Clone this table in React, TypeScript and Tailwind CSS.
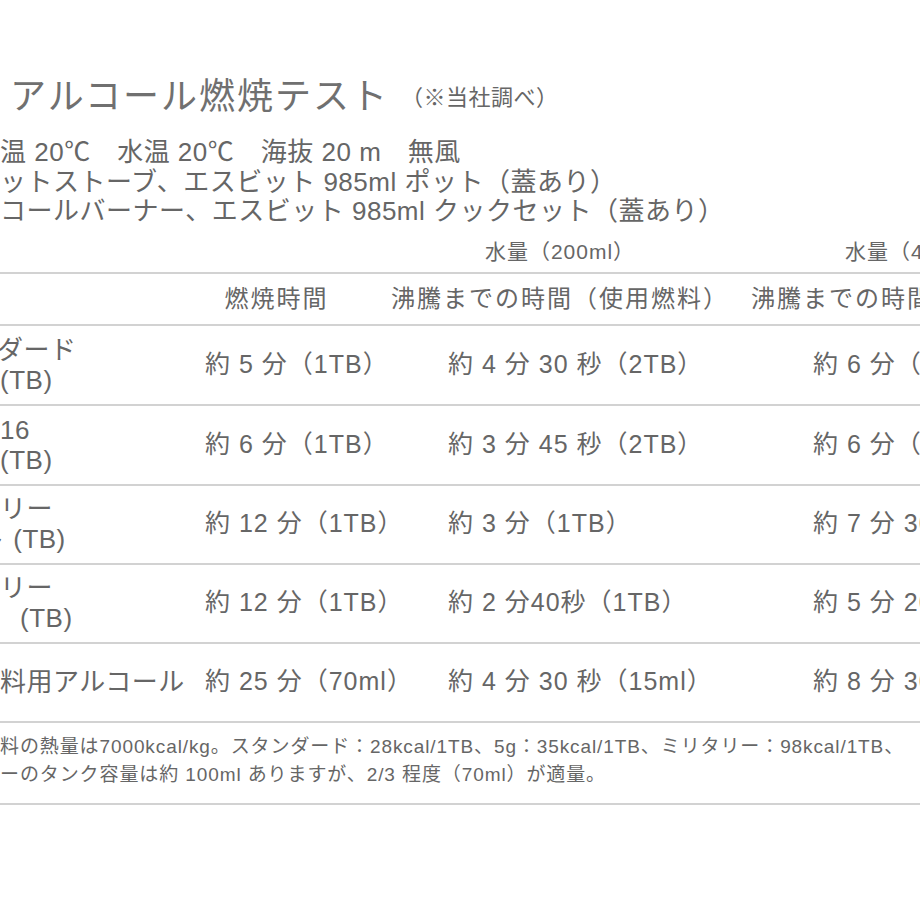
const font = "font-['Liberation_Sans','Noto_Sans_CJK_JP',sans-serif]";

type Row = {
  label: { text: string; indent: number }[];
  burn: string;
  boil200: string;
  boil400: string;
};

const rows: Row[] = [
  {
    label: [
      { text: "ダード", indent: -3 },
      { text: "(TB)", indent: 0 },
    ],
    burn: "約 5 分（1TB）",
    boil200: "約 4 分 30 秒（2TB）",
    boil400: "約 6 分（3TB）",
  },
  {
    label: [
      { text: "16", indent: 0 },
      { text: "(TB)", indent: 0 },
    ],
    burn: "約 6 分（1TB）",
    boil200: "約 3 分 45 秒（2TB）",
    boil400: "約 6 分（3TB）",
  },
  {
    label: [
      { text: "リー", indent: 0 },
      { text: "ト (TB)", indent: -21 },
    ],
    burn: "約 12 分（1TB）",
    boil200: "約 3 分（1TB）",
    boil400: "約 7 分 30 秒（2TB）",
  },
  {
    label: [
      { text: "リー", indent: 0 },
      { text: "(TB)", indent: 20 },
    ],
    burn: "約 12 分（1TB）",
    boil200: "約 2 分40秒（1TB）",
    boil400: "約 5 分 20 秒（1TB）",
  },
  {
    label: [{ text: "料用アルコール", indent: 0 }],
    burn: "約 25 分（70ml）",
    boil200: "約 4 分 30 秒（15ml）",
    boil400: "約 8 分 30 秒（25ml）",
  },
];

export default function App() {
  return (
    <div className={`w-[920px] h-[920px] bg-white overflow-hidden text-[#666666] ${font}`}>
      {/* Title */}
      <div className="flex items-center h-[44px] mt-[75px] pl-[10px] whitespace-nowrap">
        <span className="text-[36px] leading-[44px] tracking-[2px] text-[#707070]">
          アルコール燃焼テスト
        </span>
        <span className="text-[22px] leading-[44px] ml-[12px] mt-[2px] tracking-[0.5px]">（※当社調べ）</span>
      </div>

      {/* Test conditions */}
      <div className="mt-[19px] text-[26px] leading-[29.5px] tracking-[0.5px] whitespace-nowrap">
        <div>温 20℃　水温 20℃　海抜 20 m　無風</div>
        <div>ットストーブ、エスビット 985ml ポット（蓋あり）</div>
        <div>コールバーナー、エスビット 985ml クックセット（蓋あり）</div>
      </div>

      {/* Table */}
      <div className="w-[1100px] mt-[1px]">
        <div className="grid grid-cols-[195px_185px_360px_360px] h-[44px] items-end pb-[8px] text-[21px] leading-[24px] tracking-[1px] whitespace-nowrap">
          <div />
          <div />
          <div className="text-center">水量（200ml）</div>
          <div className="text-center">水量（400ml）</div>
        </div>

        <div className="grid grid-cols-[195px_185px_360px_360px] h-[52px] items-center border-t-2 border-[#d2d2d2] text-[24px] tracking-[2px] whitespace-nowrap">
          <div />
          <div className="text-center pr-[22px]">燃焼時間</div>
          <div className="text-center">沸騰までの時間（使用燃料）</div>
          <div className="text-center">沸騰までの時間（使用燃料）</div>
        </div>

        {rows.map((r, i) => (
          <div
            key={i}
            className={`grid grid-cols-[195px_185px_360px_360px] items-center border-t-2 border-[#d2d2d2] whitespace-nowrap text-[25px] tracking-[1px] ${
              i < 2 ? "h-[80px]" : "h-[79px]"
            }`}
          >
            <div className="overflow-hidden text-[26px] leading-[30px] tracking-[0.5px]">
              {r.label.map((l, j) => (
                <div key={j} style={{ marginLeft: l.indent }}>
                  {l.text}
                </div>
              ))}
            </div>
            <div className="pl-[10px]">{r.burn}</div>
            <div className="pl-[68px]">{r.boil200}</div>
            <div className="pl-[73px]">{r.boil400}</div>
          </div>
        ))}

        {/* Notes */}
        <div className="border-t-2 border-b-2 border-[#d2d2d2] h-[84px] pt-[10px] text-[19px] leading-[28px] tracking-[0.9px] whitespace-nowrap">
          <div>料の熱量は7000kcal/kg。スタンダード：28kcal/1TB、5g：35kcal/1TB、ミリタリー：98kcal/1TB、</div>
          <div>ーのタンク容量は約 100ml ありますが、2/3 程度（70ml）が適量。</div>
        </div>
      </div>
    </div>
  );
}
